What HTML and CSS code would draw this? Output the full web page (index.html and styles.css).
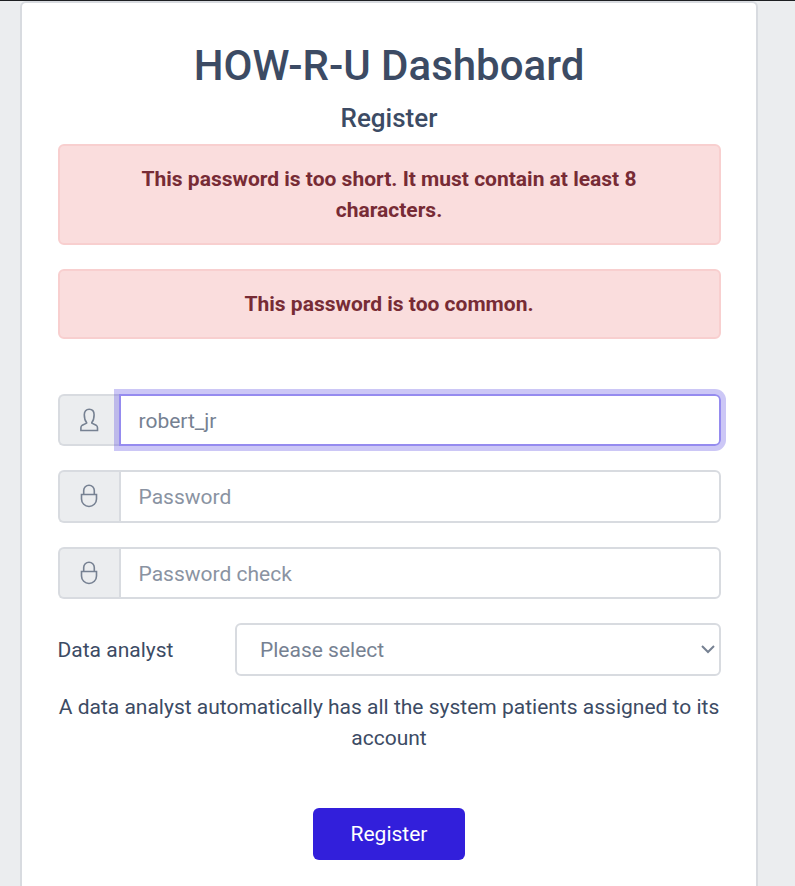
FILE: index.html
```html
<!DOCTYPE html>
<html lang="en">
<head>
<meta charset="utf-8">
<title>HOW-R-U Dashboard</title>
<link rel="stylesheet" href="styles.css">
</head>
<body>
<main class="card">
<h1>HOW-R-U Dashboard</h1>
<h2>Register</h2>
<div class="alert">This password is too short. It must contain at least 8 characters.</div>
<div class="alert">This password is too common.</div>
<form class="form">
<div class="group">
<span class="addon"><svg class="icon" viewBox="0 0 20 24"><path d="M7.600 14.500C5.800 12.500 5.300 10 5.300 6.800C5.300 3.400 7.100 1.300 10.200 1.300s4.900 2.100 4.900 5.500C15.100 10 14.600 12.500 12.800 14.500v.6l4.300 2.100Q18.500 18.100 18.500 19.800V22.500H1.900V19.800Q1.900 18.100 3.300 17.200L7.600 15.100z"/></svg></span>
<div class="field focused">robert_jr</div>
</div>
<div class="group tall">
<span class="addon"><svg class="icon" viewBox="0 0 20 24"><path d="M2.500 10.500h15v4.500a7.500 7.500 0 0 1-15 0zM4.700 10.500V6.500a5.300 5.300 0 0 1 10.600 0v4"/></svg></span>
<div class="field placeholder">Password</div>
</div>
<div class="group">
<span class="addon"><svg class="icon" viewBox="0 0 20 24"><path d="M2.500 10.500h15v4.500a7.500 7.500 0 0 1-15 0zM4.700 10.500V6.500a5.300 5.300 0 0 1 10.600 0v4"/></svg></span>
<div class="field placeholder">Password check</div>
</div>
<div class="row">
<span class="label">Data analyst</span>
<div class="select"><span class="value">Please select</span><svg class="chevron" viewBox="0 0 14 9"><path d="M1 1l6 6 6-6"/></svg></div>
</div>
<p class="help">A data analyst automatically has all the system patients assigned to its account</p>
<button class="submit" type="button">Register</button>
</form>
</main>
</body>
</html>
```
FILE: styles.css
```css
* { box-sizing: border-box; }
html { background: #ebedef; }
body {
  margin: 0;
  height: 886px;
  border-top: 1px solid #1d1f22;
  padding: 0 37px 0 20px;
  font: 400 21px/31px Roboto, sans-serif;
  color: #3c4b64;
}
.card {
  height: 885px;
  background: #fff;
  border: 2px solid #d8dbe0;
  border-bottom: 0;
  border-radius: 6px 6px 0 0;
  padding: 38px 35px 0 36px;
  text-align: center;
}
h1 { margin: 0 1px 11px 0; font-size: 42px; line-height: 50px; font-weight: 500; }
h2 { margin: 0 1px 10px 0; font-size: 26px; line-height: 32px; font-weight: 500; }
.alert {
  margin-bottom: 24px;
  padding: 18px 31px 17px 30px;
  border: 2px solid #f8cfcf;
  border-radius: 6px;
  background: #fadddd;
  color: #772b35;
  font-weight: 700;
}
.form { padding-top: 31px; }
.group { display: flex; height: 52px; margin-bottom: 24px; }
.tall { height: 53px; }
.addon {
  display: flex;
  align-items: center;
  justify-content: center;
  width: 61px;
  border: 2px solid #d8dbe0;
  border-right: 0;
  border-radius: 6px 0 0 6px;
  background: #ebedef;
  padding-right: 2px;
}
.icon { width: 20px; height: 24px; fill: none; stroke: #768192; stroke-width: 1.600; }
.tall .icon { margin-top: -1px; }
.field {
  flex: 1;
  border: 2px solid #d8dbe0;
  border-radius: 0 6px 6px 0;
  padding: 9.500px 17.500px;
  text-align: left;
  color: #768192;
}
.placeholder { color: #8a93a2; }
.focused { border-color: #958bef; box-shadow: 0 0 0 5px rgba(50, 31, 219, 0.25); }
.row { display: flex; height: 53px; align-items: center; margin-bottom: 16px; }
.label { width: 177px; padding-top: 1px; text-align: left; text-indent: -0.500px; }
.value { padding-top: 1px; }
.select {
  display: flex;
  flex: 1;
  height: 53px;
  align-items: center;
  justify-content: space-between;
  border: 2px solid #d8dbe0;
  border-radius: 6px;
  padding: 0 4px 0 23px;
  color: #768192;
}
.chevron { width: 14px; height: 9px; fill: none; stroke: #768192; stroke-width: 2; }
.help { margin: 0 -9px 54px -10px; padding: 0 10px; }
.submit {
  width: 152px;
  height: 52px;
  margin-right: 1px;
  border: 0;
  border-radius: 6px;
  padding: 1px 0 0;
  background: #321fdb;
  color: #fff;
  font: inherit;
}
```
